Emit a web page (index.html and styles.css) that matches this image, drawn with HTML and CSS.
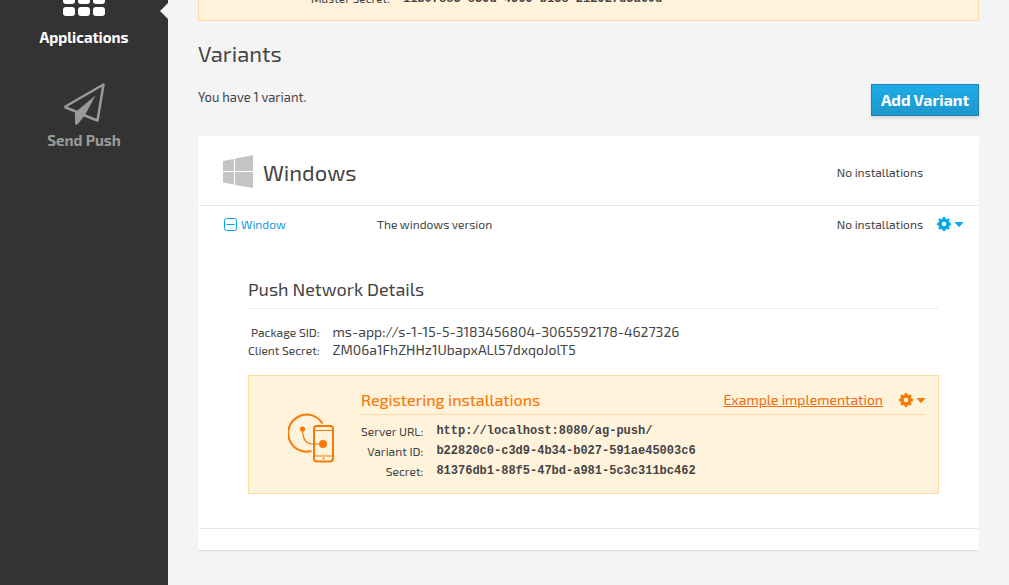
FILE: index.html
```html
<!DOCTYPE html>
<html lang="en">
<head>
<meta charset="utf-8">
<meta name="viewport" content="width=device-width, initial-scale=1">
<title>Variants</title>
<link rel="stylesheet" href="styles.css">
</head>
<body>
<svg class="sprite" aria-hidden="true">
  <symbol id="gear" viewBox="0 0 14 14">
    <g fill="currentColor">
      <path fill-rule="evenodd" d="M7 1.500a5.500 5.500 0 1 0 0 11a5.500 5.500 0 0 0 0-11zm0 3.200a2.300 2.300 0 1 1 0 4.600 2.300 2.300 0 0 1 0-4.600z"/>
      <path id="tooth" d="M5.300 3L5.800 0h2.400l.5 3z"/>
      <use href="#tooth" transform="rotate(45 7 7)"/>
      <use href="#tooth" transform="rotate(90 7 7)"/>
      <use href="#tooth" transform="rotate(135 7 7)"/>
      <use href="#tooth" transform="rotate(180 7 7)"/>
      <use href="#tooth" transform="rotate(225 7 7)"/>
      <use href="#tooth" transform="rotate(270 7 7)"/>
      <use href="#tooth" transform="rotate(315 7 7)"/>
    </g>
  </symbol>
  <symbol id="caret" viewBox="0 0 10 5"><path fill="currentColor" d="M.4 0h9.200L5.600 4.600a.8.8 0 0 1-1.200 0z"/></symbol>
</svg>
<div class="page">
  <nav class="sidebar">
    <a class="nav-item active" href="#applications">
      <svg width="42" height="30" viewBox="0 0 42 30" fill="#fff" aria-hidden="true">
        <rect y="0" width="12" height="6" rx="2"/><rect x="15" y="0" width="12" height="6" rx="2"/><rect x="30" y="0" width="12" height="6" rx="2"/>
        <rect y="9" width="12" height="9" rx="3"/><rect x="15" y="9" width="12" height="9" rx="3"/><rect x="30" y="9" width="12" height="9" rx="3"/>
        <rect y="21" width="12" height="9" rx="3"/><rect x="15" y="21" width="12" height="9" rx="3"/><rect x="30" y="21" width="12" height="9" rx="3"/>
      </svg>
      <span>Applications</span>
    </a>
    <a class="nav-item" href="#send-push">
      <svg width="42" height="42" viewBox="0 0 42 42" aria-hidden="true">
        <path d="M1.500 24L40.500 1.500L34.500 37.500L20.500 32M14 29L1.500 24" fill="none" stroke="#999" stroke-width="2.500" stroke-linejoin="round"/>
        <path d="M32.500 12.500L12 29.500V41Q13.500 42.500 15 41L22 32z" fill="#999"/>
      </svg>
      <span>Send Push</span>
    </a>
  </nav>
  <main class="content">
    <section class="note app-note">
      <dl class="pairs"><dt>Master Secret:</dt><dd class="code">11b07883-839d-4569-b158-212927d5a60d</dd></dl>
    </section>
    <h1 class="title">Variants</h1>
    <div class="toolbar">
      <p class="summary">You have 1 variant.</p>
      <button class="add" type="button">Add Variant</button>
    </div>
    <table class="variants">
      <colgroup><col class="col-name"><col><col class="col-count"><col class="col-menu"></colgroup>
      <thead>
        <tr>
          <th colspan="2">
            <div class="platform">
              <svg width="30" height="34" viewBox="0 0 30 34" fill="#c4c4c4" aria-hidden="true">
                <path d="M0 6l11-2v12H0zM12 3.700L30 0v16H12zM0 17h11v12.500L0 27.500zM12 17h18v16L12 30z"/>
              </svg>
              <h2>Windows</h2>
            </div>
          </th>
          <th class="count">No installations</th>
          <th></th>
        </tr>
      </thead>
      <tbody>
        <tr class="variant">
          <td><a class="toggle" href="#window">
            <svg width="13" height="13" viewBox="0 0 13 13" fill="none" stroke="#00a8e1" aria-hidden="true"><rect x=".5" y=".5" width="12" height="12" rx="2"/><path d="M2.500 6.500h8"/></svg>Window</a></td>
          <td>The windows version</td>
          <td class="count">No installations</td>
          <td><button class="menu" type="button" aria-label="Variant actions"><svg class="gear"><use href="#gear"/></svg><svg class="caret"><use href="#caret"/></svg></button></td>
        </tr>
        <tr>
          <td class="details" colspan="4">
            <h3>Push Network Details</h3>
            <dl class="pairs network">
              <dt>Package SID:</dt><dd>ms-app://s-1-15-5-3183456804-3065592178-4627326</dd>
              <dt>Client Secret:</dt><dd>ZM06a1FhZHHz1UbapxALl57dxqoJolT5</dd>
            </dl>
            <section class="note register">
              <svg class="device" width="46" height="50" viewBox="0 0 46 50" fill="none" stroke="#f77a08" stroke-width="2" aria-hidden="true">
                <path d="M34.500 10.500A18.500 18.500 0 1 0 23.500 38"/>
                <rect x="26" y="13" width="19" height="35.500" rx="3"/>
                <path d="M26 17.500h19M26 43h19" stroke-width="1"/>
                <path d="M14.500 16c0 9 3 15 10 15h10" stroke-width="1.200"/>
                <circle cx="14.500" cy="16" r="2.600" fill="#f77a08" stroke="none"/>
                <circle cx="35" cy="31" r="4" fill="#f77a08" stroke="none"/>
                <circle cx="35.500" cy="45.500" r="1" fill="#f77a08" stroke="none"/>
              </svg>
              <div class="register-body">
                <header class="register-head">
                  <h4>Registering installations</h4>
                  <a class="example" href="#example">Example implementation</a>
                  <button class="menu" type="button" aria-label="Registration actions"><svg class="gear"><use href="#gear"/></svg><svg class="caret"><use href="#caret"/></svg></button>
                </header>
                <dl class="pairs keys">
                  <dt>Server URL:</dt><dd class="code">http://localhost:8080/ag-push/</dd>
                  <dt>Variant ID:</dt><dd class="code">b22820c0-c3d9-4b34-b027-591ae45003c6</dd>
                  <dt>Secret:</dt><dd class="code">81376db1-88f5-47bd-a981-5c3c311bc462</dd>
                </dl>
              </div>
            </section>
          </td>
        </tr>
      </tbody>
    </table>
  </main>
</div>
</body>
</html>
```
FILE: styles.css
```css
* { box-sizing: border-box; }
body {
  margin: 0;
  background: #f4f4f4;
  color: #444;
  font: 12px/18px "Exo 2", "Open Sans", sans-serif;
  overflow-x: hidden;
}
h1, h2, h3, h4, p, dl, dd { margin: 0; font-weight: 400; }
button { font: inherit; cursor: pointer; }
svg { display: block; flex: none; }
.sprite { position: absolute; width: 0; height: 0; }

.page { display: flex; min-height: 100vh; }
.sidebar {
  display: flex;
  flex-direction: column;
  gap: 36px;
  flex: none;
  width: 168px;
  background: #333;
}
.nav-item {
  position: relative;
  display: flex;
  flex-direction: column;
  align-items: center;
  gap: 5px;
  color: #999;
  font-size: 15px;
  font-weight: 700;
  line-height: 20px;
  text-decoration: none;
}
.nav-item.active { gap: 11px; margin-top: -14px; color: #fff; }
.nav-item.active::after {
  content: "";
  position: absolute;
  right: 0;
  top: 17px;
  border: solid transparent;
  border-width: 8px 8px 8px 0;
  border-right-color: #f4f4f4;
}

.content { flex: 1; min-width: 0; padding: 0 30px 34px; }
.note { background: #fff3dc; border: 1px solid #fdd9a5; }
.app-note { margin-top: -32px; padding: 20px 0 11px 112px; }
.pairs { display: grid; grid-template-columns: max-content 1fr; column-gap: 13px; }
.pairs dt { text-align: right; }
.app-note dt { line-height: 18px; }
.pairs .code { font: 700 12px/20px "Liberation Mono", monospace; }
.title { margin-top: 17px; font-size: 22px; line-height: 30px; }
.toolbar { display: flex; justify-content: space-between; margin: 16px 0 20px; }
.summary { padding-top: 4px; font-size: 13px; }
.add {
  height: 32px;
  padding: 0 9px;
  border: 1px solid #1f7fae;
  background: linear-gradient(#1cace8, #1f98cd);
  box-shadow: 0 2px 3px rgba(0, 0, 0, .12);
  color: #fff;
  font-size: 16px;
  font-weight: 700;
  line-height: 28px;
}

.variants {
  width: 100%;
  table-layout: fixed;
  border-collapse: separate;
  border-spacing: 0;
  padding: 0 1px 21px;
  background: #fff;
  box-shadow: 0 1px 1px rgba(0, 0, 0, .07);
}
.variants th, .variants td { padding: 0; text-align: left; font-weight: 400; }
.variants th { height: 70px; padding-top: 2px; border-bottom: 1px solid #e5e5e5; }
.col-name { width: 178px; }
.col-count { width: 124px; }
.col-menu { width: 41px; }
.variants .count { padding-right: 14px; text-align: right; }
.platform { display: flex; align-items: center; gap: 10px; padding-left: 24px; }
.platform h2 { font-size: 22px; line-height: 30px; }
.variant td { height: 36px; }
.toggle { display: flex; align-items: center; gap: 4px; padding-left: 25px; color: #1a97dc; text-decoration: none; }
.menu { display: flex; align-items: center; gap: 3px; padding: 0; border: 0; background: none; color: #00a8ec; }
.gear { width: 14px; height: 14px; }
.caret { width: 10px; height: 5px; }

.variants .details { padding: 35px 39px 34px 49px; border-bottom: 1px solid #e5e5e5; }
.details h3 { padding-bottom: 7px; border-bottom: 1px solid #eee; font-size: 18px; line-height: 24px; }
.network { margin: 14px 0 16px; }
.network dd { font-size: 14px; }
.register { display: flex; padding: 14px 12px 12px 39px; }
.device { margin: 23px 27px 0 0; }
.register-body { flex: 1; }
.register-head { display: flex; align-items: center; padding-bottom: 4px; border-bottom: 1px solid #fdd9a5; color: #f77a08; }
.register-head h4 { flex: 1; font-size: 16px; font-weight: 500; line-height: 20px; }
.example { margin-right: 16px; color: #f2680c; font-size: 14px; }
.register .menu { color: #f77a08; }
.keys { margin-top: 6px; line-height: 20px; }
```
